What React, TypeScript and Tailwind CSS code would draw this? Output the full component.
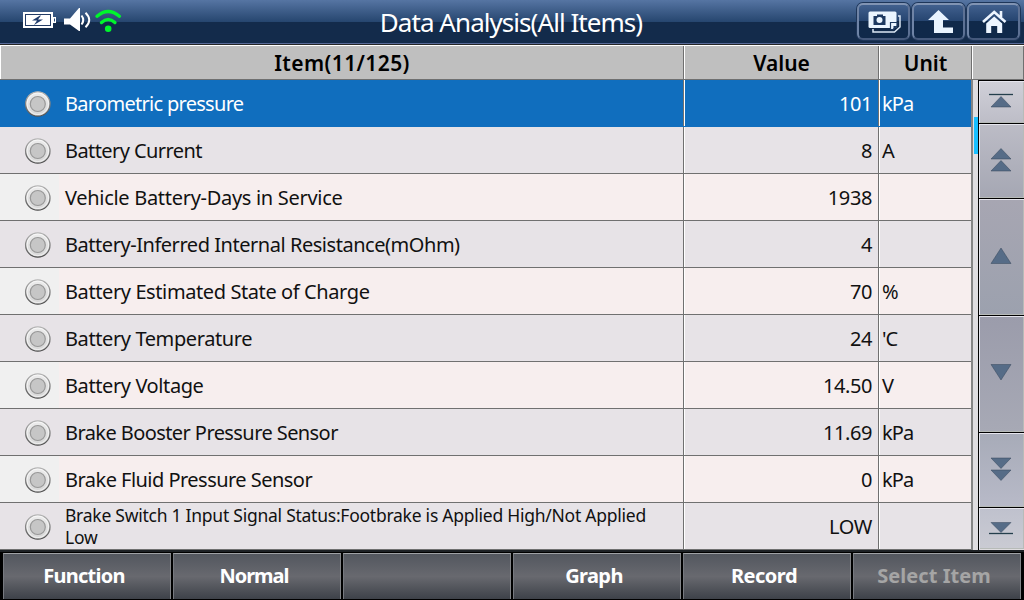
import React from "react";

type Item = {
  name: string;
  value: string;
  unit: string;
  tracking: string;
};

const items: Item[] = [
  { name: "Barometric pressure", value: "101", unit: "kPa", tracking: "tracking-[-0.7px]" },
  { name: "Battery Current", value: "8", unit: "A", tracking: "tracking-[-0.58px]" },
  { name: "Vehicle Battery-Days in Service", value: "1938", unit: "", tracking: "tracking-[-0.3px]" },
  { name: "Battery-Inferred Internal Resistance(mOhm)", value: "4", unit: "", tracking: "tracking-[-0.46px]" },
  { name: "Battery Estimated State of Charge", value: "70", unit: "%", tracking: "tracking-[-0.4px]" },
  { name: "Battery Temperature", value: "24", unit: "'C", tracking: "tracking-[-0.4px]" },
  { name: "Battery Voltage", value: "14.50", unit: "V", tracking: "tracking-[-0.4px]" },
  { name: "Brake Booster Pressure Sensor", value: "11.69", unit: "kPa", tracking: "tracking-[-0.58px]" },
  { name: "Brake Fluid Pressure Sensor", value: "0", unit: "kPa", tracking: "tracking-[-0.53px]" },
  {
    name: "Brake Switch 1 Input Signal Status:Footbrake is Applied High/Not Applied Low",
    value: "LOW",
    unit: "",
    tracking: "tracking-[-0.25px]",
  },
];

const actions = [
  { label: "Function", tracking: "tracking-[-0.75px]" },
  { label: "Normal", tracking: "tracking-[-1px]" },
  { label: "", tracking: "tracking-[0px]" },
  { label: "Graph", tracking: "tracking-[-0.6px]" },
  { label: "Record", tracking: "tracking-[-0.5px]" },
  { label: "Select Item", tracking: "tracking-[0.05px]", disabled: true },
];

function StatusIcons() {
  return (
    <svg className="ml-[22px] h-[44px] w-[102px] shrink-0" viewBox="22 0 102 44">
      <rect x="23" y="12" width="30" height="16" fill="#fff" />
      <rect x="25.5" y="14.500" width="25" height="11" fill="#fff" stroke="#233c66" />
      <path d="M53 17h3v6h-3z" fill="#fff" />
      <path d="M54 18.500h1v3h-1z" fill="#2b4a7a" />
      <path d="M40 15.500l-8 5h5l-3 4.500 9-5.500h-5l3-4z" fill="#1f3b6b" />
      <path d="M64 18.500h6L79 8h1v23h-1L70 24.500H64z" fill="#fff" />
      <path d="M81.500 15.500q3.500 4.500 0 9M85.500 12.800q7.500 7.200 0 14.400" fill="none" stroke="#fff" strokeWidth="2" />
      <path d="M97 16.200q11.200-9.400 22.400 0M101.500 22.500q6.700-6 13.400 0" fill="none" stroke="#00f52c" strokeWidth="3.400" strokeLinecap="round" />
      <circle cx="108.200" cy="28.700" r="3.300" fill="#00f52c" />
    </svg>
  );
}

function HeaderButton({ children }: { children: React.ReactNode }) {
  return (
    <button className="flex h-[37px] w-[53px] items-center justify-center rounded-[6px] border-2 border-t-[#8194b3] border-r-[#5d7194] border-b-[#45597c] border-l-[#6f84a6] bg-linear-to-b from-[#41608e] from-0% via-[#25446f] via-50% to-[#10294a] to-50% shadow-[0_0_0_1px_#1e3659]">
      {children}
    </button>
  );
}

function CameraIcon() {
  return (
    <svg className="h-[28px] w-[36px] shrink-0" viewBox="0 0 36 28">
      <path d="M7 21v3h21.500l5.500-5V8h-2" fill="none" stroke="#dce8f5" strokeWidth="1.500" />
      <rect x="2.500" y="3.500" width="28" height="16.500" rx="1.500" fill="#eaf5ff" />
      <path d="M7.500 8H11V6.500h6V8h2.500v9h-12z" fill="#1c3961" />
      <circle cx="13.500" cy="12" r="3" fill="#eaf5ff" />
      <path d="M24.500 14.500h6.500v3.500l-4 3.500h-2.500z" fill="#eaf5ff" stroke="#1c3961" strokeWidth="1.200" />
      <path d="M27.500 21v-3h3.500z" fill="#1c3961" />
    </svg>
  );
}

function BackIcon() {
  return (
    <svg className="h-[28px] w-[36px] shrink-0" viewBox="0 0 36 28">
      <path d="M17.500 2L28 12h-6v7.500h10V25H13V12H7z" fill="#eaf4ff" />
    </svg>
  );
}

function HomeIcon() {
  return (
    <svg className="h-[28px] w-[36px] shrink-0" viewBox="0 0 36 28">
      <path d="M7 14L18.200 4 29.500 14M25 3v6" fill="none" stroke="#edf5ff" strokeWidth="2.600" />
      <path d="M18.200 8.500l8 7V25h-5v-7h-6v7h-5v-9.500z" fill="#edf5ff" />
    </svg>
  );
}

function Radio() {
  return (
    <svg className="mt-px ml-6 h-[28px] w-[28px] shrink-0" viewBox="0 0 28 28">
      <defs>
        <linearGradient id="ring" x1="0" y1="0" x2="0" y2="1">
          <stop offset="0" stopColor="#b5b5b5" />
          <stop offset="1" stopColor="#4e4e4e" />
        </linearGradient>
        <linearGradient id="face" x1="0" y1="0" x2="0" y2="1">
          <stop offset="0" stopColor="#ededed" />
          <stop offset="1" stopColor="#d6d6d6" />
        </linearGradient>
      </defs>
      <circle cx="13.800" cy="14" r="12.200" fill="url(#face)" stroke="url(#ring)" strokeWidth="1.300" />
      <circle cx="13.800" cy="13.800" r="10.800" fill="none" stroke="#fff" strokeOpacity=".6" />
      <circle cx="13.800" cy="14" r="7.500" fill="#c6c6c6" stroke="#989898" strokeWidth="1.200" />
    </svg>
  );
}

function ItemRow({ item, index }: { item: Item; index: number }) {
  const selected = index === 0;
  const last = index === 9;
  const alt = index % 2 === 0;
  const tone = selected
    ? "bg-[#106ebe] text-white border-[#106ebe]"
    : alt
      ? "bg-[#f7eeee] text-[#111] border-[#707070]"
      : "bg-[#e7e3e7] text-[#111] border-[#707070]";
  return (
    <div className={`flex h-[47px] shrink-0 border-b text-[20px] ${tone}`}>
      <div className="flex w-[684px] items-center border-r border-r-[#707070]">
        <div className={`flex h-full w-[59px] shrink-0 items-center ${alt && !selected ? "bg-[#f0f0f0]" : ""}`}>
          <Radio />
        </div>
        <span
          className={
            last
              ? `ml-[6px] w-[600px] text-[17.500px] leading-[22px] ${item.tracking}`
              : `ml-[6px] whitespace-nowrap pt-px ${item.tracking}`
          }
        >
          {item.name}
        </span>
      </div>
      <div className="flex w-[195px] items-center justify-end border-r border-l border-r-[#707070] border-l-white pr-[6px]">
        <span className="pt-px tracking-[-0.4px]">{item.value}</span>
      </div>
      <div className="flex w-[92px] items-center border-l border-l-white pl-[2px]">
        <span className="pt-px tracking-[-0.9px]">{item.unit}</span>
      </div>
    </div>
  );
}

const scrollButtons = [
  { id: "first", cls: "h-[43px] from-[#d0d0d8] to-[#bdbdc7]", d: "M14 27L24 16.500 34 27z", line: "M12 14.500h24" },
  { id: "pageUp", cls: "h-[75px] from-[#bcbcc6] to-[#a5a7b3]", d: "M14 20L24 9.500 34 20zM14 32L24 21.500 34 32z", line: "" },
  { id: "up", cls: "h-[117px] from-[#a7a6b2] to-[#9ca1ae]", d: "M14 28.500L24 13 34 28.500z", line: "" },
  { id: "down", cls: "h-[117px] from-[#9b9cab] to-[#a7a9b5]", d: "M14 12.500H34L24 28z", line: "" },
  { id: "pageDown", cls: "h-[75px] from-[#a7abb8] to-[#b8bac8]", d: "M14 10H34L24 20.500zM14 22H34L24 32.500z", line: "" },
  { id: "last", cls: "h-[42px] from-[#bfc1cd] to-[#cacbd3]", d: "M14 15.500H34L24 25.500z", line: "M12 26.500h24" },
];

function Scroller() {
  return (
    <div className="flex w-[46px] flex-col border-l border-black">
      {scrollButtons.map((b) => (
        <button
          key={b.id}
          className={`flex w-[45px] shrink-0 items-center justify-center border-t border-black bg-linear-to-b shadow-[inset_1px_1px_0_#e5e5ed,inset_-1px_-1px_0_#b7bbb8] ${b.cls}`}
        >
          <svg className="-ml-px h-[44px] w-[48px] shrink-0" viewBox="0 0 48 44">
            <path d={b.d} fill="#566c87" stroke="#37475a" strokeWidth=".5" />
            <path d={b.line} stroke="#243f4c" strokeWidth="1.300" />
          </svg>
        </button>
      ))}
    </div>
  );
}

export default function App() {
  return (
    <div className="flex h-[600px] w-[1024px] flex-col overflow-hidden bg-black font-['Noto_Sans',sans-serif]">
      <header className="flex h-[45px] shrink-0 border-b border-[#262626] bg-linear-to-b from-[#5675a3] from-0% via-[#26466f] via-50% to-[#132b4b] to-50% shadow-[inset_0_-1px_0_#586b99]">
        <StatusIcons />
        <h1 className="flex flex-1 items-center justify-center pl-[41px] text-[26px] text-white">
          <span className="whitespace-nowrap tracking-[-0.95px]">Data Analysis(All Items)</span>
        </h1>
        <div className="flex gap-[2px] pt-[3px] pr-1">
          <HeaderButton><CameraIcon /></HeaderButton>
          <HeaderButton><BackIcon /></HeaderButton>
          <HeaderButton><HomeIcon /></HeaderButton>
        </div>
      </header>

      <div className="flex h-[35px] shrink-0 border-t border-b border-t-white border-b-[#707070] bg-[#bfbfbf] text-[21px] font-semibold leading-[34px] text-black">
        <div className="w-[684px] border-r border-l border-r-[#707070] border-l-white text-center tracking-[0.4px]">Item(11/125)</div>
        <div className="w-[195px] border-r border-l border-r-[#707070] border-l-white text-center">Value</div>
        <div className="w-[93px] border-r border-l border-r-[#707070] border-l-white text-center">Unit</div>
        <div className="w-[52px] border-r border-l border-r-[#707070] border-l-white" />
      </div>

      <main className="flex h-[470px] shrink-0 bg-[#dfdde0]">
        <div className="flex w-[971px] flex-col">
          {items.map((item, i) => (
            <ItemRow key={item.name} item={item} index={i} />
          ))}
        </div>
        <div className="flex w-[7px] flex-col items-end border-l-2 border-[#858585] pt-[37px]">
          <div className="h-[37px] w-[4px] bg-[#18bfff]" />
        </div>
        <Scroller />
      </main>

      <footer className="flex h-[50px] shrink-0 gap-[2px] border-t-2 border-[#1d2125] bg-black pt-px pb-px pl-[3px]">
        {actions.map((a, i) => (
          <button
            key={i}
            className={`flex w-[168px] shrink-0 items-center justify-center border-t border-r border-l border-t-[#a0a2a6] border-r-[#828488] border-l-[#777a80] bg-linear-to-b from-[#53575f] via-[#68696f] via-50% to-[#3e4249] pr-[6px] pb-[2px] text-[20px] font-bold ${a.disabled ? "text-[#a5a5a5]" : "text-white"} ${a.tracking}`}
          >
            {a.label}
          </button>
        ))}
      </footer>
    </div>
  );
}
